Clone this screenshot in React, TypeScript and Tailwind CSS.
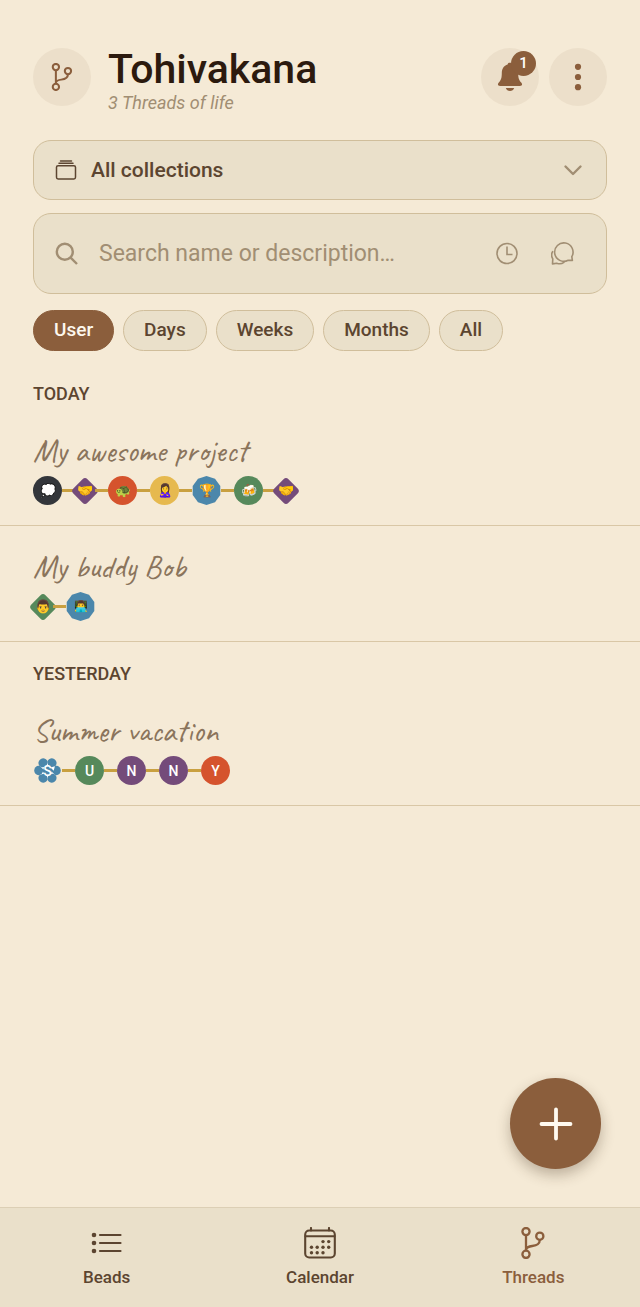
import { ReactNode, useState } from "react";

type BeadShape = "circle" | "diamond" | "polygon" | "flower";

type Bead = {
  shape: BeadShape;
  color: string;
  symbol: string;
  small?: boolean;
};

type Thread = {
  title: string;
  beads: Bead[];
};

const sections: { label: string; threads: Thread[] }[] = [
  {
    label: "TODAY",
    threads: [
      {
        title: "My awesome project",
        beads: [
          { shape: "circle", color: "#33363b", symbol: "💭" },
          { shape: "diamond", color: "#744b7a", symbol: "🤝" },
          { shape: "circle", color: "#d5532d", symbol: "🐢" },
          { shape: "circle", color: "#e6b94f", symbol: "🙎‍♀️" },
          { shape: "polygon", color: "#4b87ab", symbol: "🏆" },
          { shape: "circle", color: "#56895b", symbol: "🍻" },
          { shape: "diamond", color: "#744b7a", symbol: "🤝" },
        ],
      },
      {
        title: "My buddy Bob",
        beads: [
          { shape: "diamond", color: "#56895b", symbol: "👨" },
          { shape: "polygon", color: "#4b87ab", symbol: "👨‍💻", small: true },
        ],
      },
    ],
  },
  {
    label: "YESTERDAY",
    threads: [
      {
        title: "Summer vacation",
        beads: [
          { shape: "flower", color: "#4b87ab", symbol: "S" },
          { shape: "circle", color: "#56895b", symbol: "U" },
          { shape: "circle", color: "#744b7a", symbol: "N" },
          { shape: "circle", color: "#744b7a", symbol: "N" },
          { shape: "circle", color: "#d5532d", symbol: "Y" },
        ],
      },
    ],
  },
];

const filters = ["User", "Days", "Weeks", "Months", "All"];

const BranchIcon = ({ className }: { className: string }) => (
  <svg viewBox="0 0 32 32" className={className} fill="none" stroke="currentColor" strokeWidth="2.3">
    <circle cx="9" cy="4.6" r="3.6" />
    <circle cx="22.8" cy="9.2" r="3.6" />
    <circle cx="9" cy="27.3" r="3.6" />
    <path d="M9 8.2v15.5M22.8 12.8c0 4.6-3.2 5.6-7.6 6.2-3.4.5-5.6 1.2-6.2 3.4" />
  </svg>
);

const BellIcon = () => (
  <svg viewBox="0 0 26 32" className="h-8 w-6.5" fill="currentColor">
    <path d="M13 1.5c-1.3 0-2.2.8-2.4 2-3.7 1.2-5.8 4.3-5.8 8.4 0 5-.8 7.3-3 9.6-1.6 1.7-.9 3.4 1.3 3.4h19.8c2.2 0 2.9-1.7 1.3-3.4-2.2-2.3-3-4.6-3-9.6 0-4.1-2.1-7.2-5.8-8.4-.2-1.2-1.1-2-2.4-2z" />
    <path d="M8.8 27h8.4c-.6 1.9-2.2 3-4.2 3s-3.6-1.1-4.2-3z" />
  </svg>
);

const DotsIcon = () => (
  <svg viewBox="0 0 28 28" className="size-7" fill="currentColor">
    <circle cx="14" cy="3.8" r="3.1" />
    <circle cx="14" cy="14" r="3.1" />
    <circle cx="14" cy="24.2" r="3.1" />
  </svg>
);

const CollectionIcon = () => (
  <svg viewBox="0 0 22 22" className="size-[22px]" fill="none" stroke="currentColor" strokeWidth="1.5" strokeLinecap="round">
    <rect x="1.5" y="6.7" width="19" height="13.2" rx="1.6" />
    <path d="M4 4.2h14M5.5 1.9h11" />
  </svg>
);

const SearchIcon = () => (
  <svg viewBox="0 0 24 24" className="size-6" fill="none" stroke="currentColor" strokeWidth="2.4">
    <circle cx="9.8" cy="9.8" r="8" />
    <path d="M15.6 15.6l6.4 6.4" />
  </svg>
);

const ClockIcon = () => (
  <svg viewBox="0 0 24 24" className="size-6" fill="none" stroke="currentColor" strokeWidth="1.6">
    <circle cx="12" cy="11.5" r="10" />
    <path d="M12 4.5v8h5.5" />
  </svg>
);

const ChatIcon = () => (
  <svg viewBox="0 0 24 24" className="size-6" fill="none" stroke="currentColor" strokeWidth="1.6" strokeLinecap="round" strokeLinejoin="round">
    <path d="M21.4 18.4l-.6-3.7a9.2 9.2 0 1 0-3.6 3.5z" />
    <path d="M1.6 9.6c-1.3 2.2-1.2 5 .2 7.3l-.3 5 4.2-.7c2.2.8 5.200.6 7.200-.8" />
  </svg>
);

const ListIcon = () => (
  <svg viewBox="0 0 32 32" className="size-8" fill="none" stroke="currentColor" strokeWidth="2.2" strokeLinecap="round">
    <path d="M9 8h20.500M9 16h20.500M9 24h20.500" />
    <g fill="currentColor" stroke="none">
      <circle cx="3" cy="8" r="2.3" />
      <circle cx="3" cy="16" r="2.3" />
      <circle cx="3" cy="24" r="2.3" />
    </g>
  </svg>
);

const CalendarIcon = () => (
  <svg viewBox="0 0 32 32" className="size-8" fill="none" stroke="currentColor" strokeWidth="2.1" strokeLinecap="round">
    <rect x="1.2" y="3.5" width="29.6" height="27" rx="4" />
    <path d="M1.5 9.3h29M7 1v2.5M25 1v2.5" />
    <g fill="currentColor" stroke="none">
      {[
        [19, 14.6], [24.7, 14.6],
        [7.5, 20.2], [13.2, 20.2], [19, 20.2], [24.7, 20.2],
        [7.5, 25.7], [13.2, 25.7], [19, 25.7],
      ].map(([x, y]) => (
        <circle key={`${x}-${y}`} cx={x} cy={y} r="1.7" />
      ))}
    </g>
  </svg>
);

const angles = [0, 60, 120, 180, 240, 300];

const BeadFigure = ({ shape, color }: { shape: BeadShape; color: string }) => {
  if (shape === "diamond") {
    return (
      <svg viewBox="0 0 20 20" className="size-5 overflow-visible" fill={color}>
        <rect width="20" height="20" rx="3.5" transform="rotate(45 10 10)" />
      </svg>
    );
  }
  return (
    <svg viewBox="0 0 29 29" className="size-[29px]" fill={color}>
      {shape === "circle" && <circle cx="14.5" cy="14.5" r="14.5" />}
      {shape === "polygon" && (
        <path d="M14.5 0L23 2.8L28.3 10V19L23 26.2L14.5 29L6 26.2L.7 19V10L6 2.8z" />
      )}
      {shape === "flower" && (
        <>
          <circle cx="14.5" cy="14.5" r="6.5" />
          {angles.map((angle) => (
            <g key={angle} transform={`rotate(${angle} 14.5 14.5)`}>
              <ellipse cx="23.4" cy="14.5" rx="4.4" ry="4.7" />
              <path d="M18.6 15.6l3.2 3.2l-4.4 1.2z" fill="#fff" />
            </g>
          ))}
        </>
      )}
    </svg>
  );
};

const BeadItem = ({ bead }: { bead: Bead }) => {
  const letter = /^[A-Z]$/.test(bead.symbol);
  return (
    <li className="group flex items-center">
      <span className="h-[3px] w-[13px] bg-[#c9a040] group-first:hidden" />
      <span className="grid place-items-center *:col-start-1 *:row-start-1">
        <BeadFigure shape={bead.shape} color={bead.color} />
        <span
          className={`flex w-0 justify-center leading-none text-white ${
            letter ? "text-sm font-medium" : bead.small ? "text-[11px]" : "text-[13px]"
          }`}
        >
          {bead.symbol}
        </span>
      </span>
    </li>
  );
};

const ThreadRow = ({ thread }: { thread: Thread }) => (
  <li className="border-b border-[#d9c7a6] px-[33px] pt-[25px] pb-5">
    <a href="#thread" className="block">
      <h3 className="font-['Caveat',cursive] text-[32px] leading-8 text-[#8a745c]">{thread.title}</h3>
      <ul className="mt-[9px] flex h-[29px] items-center">
        {thread.beads.map((bead, i) => (
          <BeadItem key={i} bead={bead} />
        ))}
      </ul>
    </a>
  </li>
);

const TabLink = ({ label, active, children }: { label: string; active?: boolean; children: ReactNode }) => (
  <a
    href={`#${label.toLowerCase()}`}
    className={`flex flex-col items-center gap-1.5 text-[17px] leading-6 font-medium ${
      active ? "text-[#8b5e3c]" : "text-[#5c4530]"
    }`}
  >
    {children}
    {label}
  </a>
);

const App = () => {
  const [filter, setFilter] = useState("User");

  return (
    <div className="flex min-h-screen flex-col bg-[#f5ead6] font-['MiSans','Roboto',sans-serif] text-[#5c4530]">
      <header className="flex items-start px-[33px] pt-12">
        <div className="grid size-[58px] place-items-center rounded-full bg-[#ecdfca] text-[#8b5e3c]">
          <BranchIcon className="size-7" />
        </div>
        <div className="ml-[17px] flex-1">
          <h1 className="text-[41px] leading-[42px] font-medium text-[#2c1a0e]">Tohivakana</h1>
          <p className="text-lg leading-[26px] text-[#a18e73] italic">3 Threads of life</p>
        </div>
        <div className="flex gap-2.5 text-[#8b5e3c]">
          <button aria-label="Notifications" className="relative grid size-[58px] place-items-center rounded-full bg-[#ecdfca]">
            <BellIcon />
            <span className="absolute top-[3px] right-[3px] size-[25px] rounded-full bg-[#8b5e3c] text-center text-[15px] leading-[25px] font-medium text-white">
              1
            </span>
          </button>
          <button aria-label="More options" className="grid size-[58px] place-items-center rounded-full bg-[#ecdfca]">
            <DotsIcon />
          </button>
        </div>
      </header>

      <div className="flex flex-col gap-[13px] px-[33px] pt-6">
        <label className="flex h-[60px] items-center gap-3.5 rounded-[18px] border border-[#d0be9b] bg-[#eae0ca] px-[21px]">
          <CollectionIcon />
          <select aria-label="Collection" className="flex-1 appearance-none bg-transparent pt-0.5 text-[21px] font-medium outline-none">
            <option>All collections</option>
          </select>
          <svg viewBox="0 0 24 24" className="size-6 text-[#a18e73]" fill="none" stroke="currentColor" strokeWidth="2.4" strokeLinecap="round" strokeLinejoin="round">
            <path d="M4.5 8.5l7.5 7.5 7.5-7.5" />
          </svg>
        </label>
        <div className="flex h-[81px] items-center rounded-[18px] border border-[#d0be9b] bg-[#eae0ca] px-[21px] text-[#a18e73]">
          <SearchIcon />
          <input
            type="search"
            aria-label="Search threads"
            placeholder="Search name or description…"
            className="ml-5 min-w-0 flex-1 bg-transparent pt-0.5 text-[23px] outline-none placeholder:text-[#a18e73]"
          />
          <button aria-label="Recent" className="mr-8">
            <ClockIcon />
          </button>
          <button aria-label="Messages" className="mr-2.5">
            <ChatIcon />
          </button>
        </div>
      </div>

      <div className="flex gap-[9px] px-[33px] pt-4">
        {filters.map((name) => (
          <button
            key={name}
            onClick={() => setFilter(name)}
            className={`h-[41px] rounded-full border px-5 text-[19px] font-medium ${
              filter === name ? "border-[#8b5e3c] bg-[#8b5e3c] text-[#fdf8ee]" : "border-[#d0be9b] bg-[#eae0ca]"
            }`}
          >
            {name}
          </button>
        ))}
      </div>

      <main className="flex-1 pt-[11px]">
        {sections.map((section) => (
          <section key={section.label}>
            <h2 className="px-[33px] pt-5 pb-1 text-lg leading-6 font-medium">{section.label}</h2>
            <ul>
              {section.threads.map((thread) => (
                <ThreadRow key={thread.title} thread={thread} />
              ))}
            </ul>
          </section>
        ))}
      </main>

      <footer className="sticky bottom-0">
        <button
          aria-label="Add thread"
          className="absolute right-[39px] bottom-[138px] grid size-[91px] place-items-center rounded-full bg-[#8b5e3c] text-[#fffaf0] shadow-[0_6px_14px_rgba(60,40,20,0.3)]"
        >
          <svg viewBox="0 0 34 34" className="size-[34px]" stroke="currentColor" strokeWidth="3.8" strokeLinecap="round">
            <path d="M17 2.5v29M2.5 17h29" />
          </svg>
        </button>
        <nav className="grid h-[100px] grid-cols-3 border-t border-[#dccfb5] bg-[#eae0ca] pt-[19px]">
          <TabLink label="Beads">
            <ListIcon />
          </TabLink>
          <TabLink label="Calendar">
            <CalendarIcon />
          </TabLink>
          <TabLink label="Threads" active>
            <BranchIcon className="size-8" />
          </TabLink>
        </nav>
      </footer>
    </div>
  );
};

export default App;
